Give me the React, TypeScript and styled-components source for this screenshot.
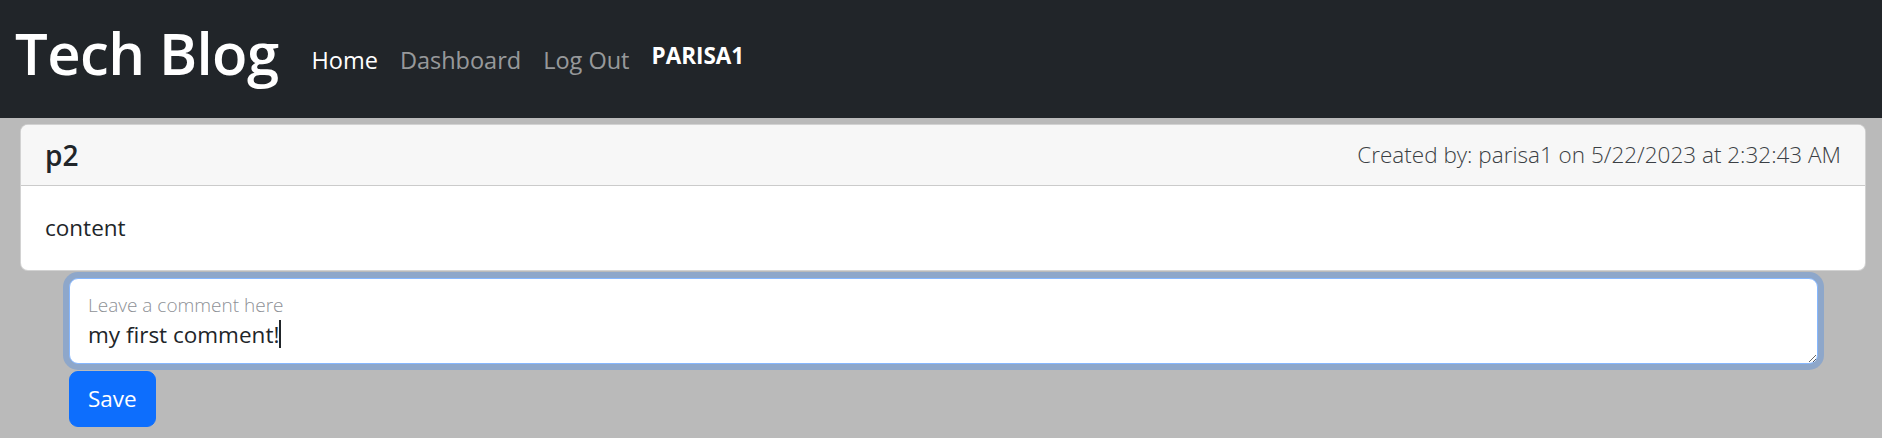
import React, { useEffect, useRef } from 'react';
import styled, { createGlobalStyle } from 'styled-components';

const GlobalStyle = createGlobalStyle`
  body {
    margin: 0;
    background: #bababa;
    font-family: "Open Sans", "Noto Sans", sans-serif;
    color: #212529;
  }
`;

const Navbar = styled.nav`
  height: 118px;
  background: #212529;
  display: flex;
  align-items: flex-start;
  padding-left: 15px;
  box-sizing: border-box;
`;

const Brand = styled.a`
  font-size: 58px;
  font-weight: 600;
  line-height: 1;
  color: #ffffff;
  margin-top: 24px;
  margin-right: 22px;
  letter-spacing: -0.6px;
  text-decoration: none;
`;

const NavList = styled.ul`
  display: flex;
  list-style: none;
  margin: 42px 0 0;
  padding: 0;
`;

const NavLink = styled.a<{ $active?: boolean; $user?: boolean }>`
  display: block;
  padding: 0 11px;
  font-size: ${(p) => (p.$user ? '22.5px' : '23.5px')};
  font-weight: ${(p) => (p.$user ? 700 : 400)};
  line-height: 36px;
  color: ${(p) => (p.$active || p.$user ? '#ffffff' : 'rgba(255, 255, 255, 0.55)')};
  text-decoration: none;
  margin-top: ${(p) => (p.$user ? '-4px' : '0')};
`;

const Main = styled.main`
  padding: 6px 16px 12px 20px;
`;

const Card = styled.article`
  background: #ffffff;
  border: 1px solid rgba(0, 0, 0, 0.175);
  border-radius: 8px;
  overflow: hidden;
`;

const CardHeader = styled.header`
  display: flex;
  justify-content: space-between;
  align-items: center;
  padding: 12px 24px;
  background: #f7f7f7;
  border-bottom: 1px solid rgba(0, 0, 0, 0.175);
`;

const Title = styled.h5`
  margin: 0;
  font-size: 28px;
  font-weight: 600;
  line-height: 36px;
`;

const Meta = styled.span`
  font-size: 22.5px;
  font-weight: 300;
  line-height: 36px;
  color: #3b3f44;
`;

const CardBody = styled.div`
  padding: 24px;
  font-size: 22.5px;
  line-height: 36px;
`;

const Form = styled.form`
  margin: 7px 48px 0 49px;
`;

const Floating = styled.div`
  position: relative;
`;

const TextArea = styled.textarea`
  display: block;
  width: 100%;
  height: 86px;
  box-sizing: border-box;
  padding: 38px 18px 8px;
  font-family: inherit;
  font-size: 22.5px;
  line-height: 36px;
  color: #212529;
  background: #ffffff;
  border: 1px solid #86b7fe;
  border-radius: 9px;
  box-shadow: 0 0 0 6px rgba(13, 110, 253, 0.25);
  outline: none;
  resize: vertical;
  caret-color: transparent;
`;

const FloatLabel = styled.label`
  position: absolute;
  top: 18px;
  left: 19px;
  font-size: 19px;
  font-weight: 300;
  line-height: 1;
  color: #8e9196;
  pointer-events: none;
`;

/* the text cursor sitting after the typed comment */
const Caret = styled.span`
  position: absolute;
  top: 42px;
  left: 210px;
  width: 2px;
  height: 28px;
  background: #212529;
  pointer-events: none;
`;

const SaveButton = styled.button`
  margin-top: 7px;
  padding: 9px 18px;
  font-family: inherit;
  font-size: 22.5px;
  line-height: 36px;
  color: #ffffff;
  background: #0d6efd;
  border: 1px solid #0d6efd;
  border-radius: 9px;
  cursor: pointer;
`;

const App: React.FC = () => {
  const areaRef = useRef<HTMLTextAreaElement>(null);

  useEffect(() => {
    const el = areaRef.current;
    if (el) {
      el.focus();
      const end = el.value.length;
      el.setSelectionRange(end, end);
    }
  }, []);

  return (
    <>
      <GlobalStyle />
      <Navbar>
        <Brand href="#">Tech Blog</Brand>
        <NavList>
          <li><NavLink href="#" $active>Home</NavLink></li>
          <li><NavLink href="#">Dashboard</NavLink></li>
          <li><NavLink href="#">Log Out</NavLink></li>
          <li><NavLink href="#" $user>PARISA1</NavLink></li>
        </NavList>
      </Navbar>

      <Main>
        <Card>
          <CardHeader>
            <Title>p2</Title>
            <Meta>Created by: parisa1 on 5/22/2023 at 2:32:43 AM</Meta>
          </CardHeader>
          <CardBody>content</CardBody>
        </Card>

        <Form onSubmit={(e) => e.preventDefault()}>
          <Floating>
            <TextArea
              ref={areaRef}
              id="comment"
              placeholder="Leave a comment here"
              defaultValue="my first comment!"
            />
            <FloatLabel htmlFor="comment">Leave a comment here</FloatLabel>
            <Caret />
          </Floating>
          <SaveButton type="submit">Save</SaveButton>
        </Form>
      </Main>
    </>
  );
};

export default App;
